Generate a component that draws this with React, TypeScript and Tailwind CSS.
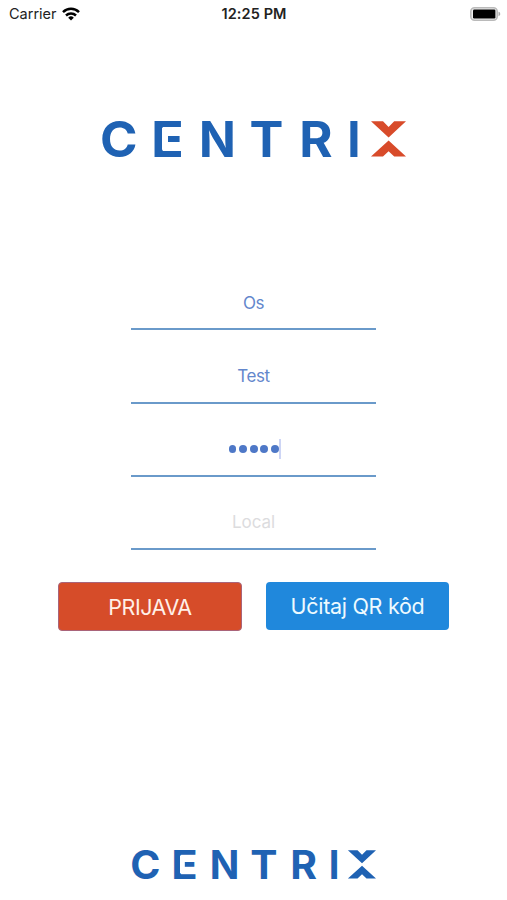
interface LogoProps {
  className: string;
  markColor: string;
}

interface Letter {
  char: string;
  x: number;
  stretch: number;
}

// x is the centre of each letter in the 305x36 wordmark
const LETTERS: Letter[] = [
  { char: "C", x: 17.7, stretch: 1.04 },
  { char: "E", x: 66.5, stretch: 1.11 },
  { char: "N", x: 116.4, stretch: 0.99 },
  { char: "T", x: 165.5, stretch: 1.04 },
  { char: "R", x: 214.8, stretch: 1.04 },
  { char: "I", x: 252.8, stretch: 0.97 },
];

const FIELDS = [
  { id: "org", value: "Os" },
  { id: "user", value: "Test" },
  { id: "password", value: "", dots: 5 },
  { id: "server", value: "", placeholder: "Local" },
];

export default function App() {
  return (
    <main className="flex h-[900px] w-full flex-col items-center overflow-hidden bg-white font-['Inter','Liberation_Sans',sans-serif]">
      <StatusBar />
      <Logo className="mt-[92.5px] h-9 w-[305px]" markColor="#d84b2a" />

      <div className="mt-[100.5px] flex w-[245px] flex-col">
        {FIELDS.map((f) => (
          <div key={f.id} className="flex h-[73.3px] flex-col justify-end">
            <div className="flex h-[52px] items-center justify-center border-b-2 border-[#6a9aca] text-[17px] tracking-[-0.4px] text-[#6387cc]">
              {f.dots ? <PasswordDots count={f.dots} /> : null}
              {f.value}
              {f.placeholder && <span className="tracking-[-0.1px] text-[#dcdcde]">{f.placeholder}</span>}
            </div>
          </div>
        ))}
      </div>

      <div className="mt-8 flex w-[391px] justify-between">
        <button className="h-[49px] w-[184px] rounded-[4px] border border-[#a9647a] bg-[#d64c29] text-[21.5px] tracking-[-0.5px] text-[#fff0e8]">
          PRIJAVA
        </button>
        <button className="h-[48px] w-[183px] rounded-[4px] bg-[#2088dc] text-[21.5px] tracking-[-0.3px] text-[#eefaff]">
          Učitaj QR kôd
        </button>
      </div>

      <Logo className="mt-auto mb-[21.5px] h-[29px] w-[245px]" markColor="#1f62b3" />
    </main>
  );
}

function StatusBar() {
  return (
    <header className="grid h-7 w-full shrink-0 grid-cols-3 items-center pr-[6px] pb-px pl-[9px] text-[#222]">
      <div className="flex items-center gap-[5px] text-[14.5px]">
        Carrier
        <svg viewBox="0 0 18 14" className="h-[14px] w-[18px]" fill="none" stroke="#000" strokeWidth="2.5">
          <path d="M1 5.1a11.5 11.5 0 0 1 16 0" />
          <path d="M4 8.5a7.3 7.3 0 0 1 10 0" />
          <path d="M9 13.4 6.2 10.7a4 4 0 0 1 5.6 0Z" fill="#000" stroke="none" />
        </svg>
      </div>
      <div className="pr-[2px] text-center text-[14.5px] font-semibold tracking-[0.1px]">12:25 PM</div>
      <svg viewBox="0 0 31 14" className="h-[14px] w-[31px] justify-self-end">
        <rect x="0.8" y="0.8" width="26.4" height="12.4" rx="3.8" fill="#eee" stroke="#bababa" strokeWidth="1.6" />
        <rect x="3" y="2.6" width="22.4" height="8.8" rx="1.2" fill="#000" />
        <path d="M28.5 4.8c2.3.6 2.3 3.8 0 4.4Z" fill="#aaa" />
      </svg>
    </header>
  );
}

function PasswordDots({ count }: { count: number }) {
  return (
    <div className="flex items-center gap-[2.8px] pb-[2px] pl-[3px]">
      {Array.from({ length: count }, (_, i) => (
        <span key={i} className="size-[7.8px] rounded-full bg-[#4e78c7]" />
      ))}
      <span className="-ml-[2px] h-5 w-[2px] bg-[#cdd5f5]" />
    </div>
  );
}

function Logo({ className, markColor }: LogoProps) {
  return (
    <svg viewBox="0 0 305 36" className={`shrink-0 overflow-visible ${className}`} role="img" aria-label="Centrix">
      <g fill="#1f62b3" fontSize="48.8" fontWeight="700" textAnchor="middle">
        {LETTERS.map((l) => (
          <text key={l.char} transform={`translate(${l.x} 35.5) scale(${l.stretch} 1)`}>
            {l.char}
          </text>
        ))}
      </g>
      {/* gap between the stem of the E and its middle bar */}
      <rect x="61" y="7" width="6" height="21.8" fill="#fff" />
      <path
        d="M270 .3h12l5.6 5.6 5.6-5.6H305l-17.4 16.2ZM270 35.5l17.6-16L305 35.5h-11.8l-5.6-5.3-5.6 5.3Z"
        fill={markColor}
      />
    </svg>
  );
}
